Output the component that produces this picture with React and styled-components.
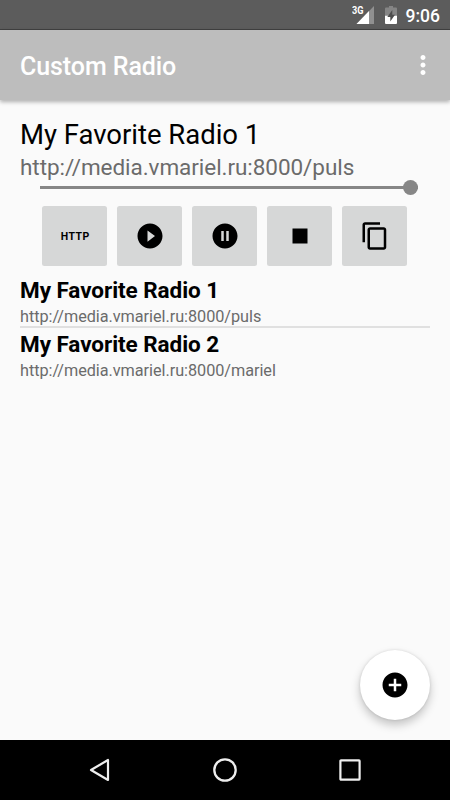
import React, { useState } from "react";
import styled, { createGlobalStyle } from "styled-components";
import {
  MdAddCircle,
  MdContentCopy,
  MdMoreVert,
  MdPauseCircleFilled,
  MdPlayCircleFilled,
  MdStop,
} from "react-icons/md";

const stations = [
  { name: "My Favorite Radio 1", url: "http://media.vmariel.ru:8000/puls" },
  { name: "My Favorite Radio 2", url: "http://media.vmariel.ru:8000/mariel" },
];

const SignalIcon = () => (
  <svg width="24" height="20" viewBox="0 0 24 20">
    <path d="M4.5 19L22 1V19Z" fill="#909090" />
    <path d="M4.5 19L17 6.1V19Z" fill="#fff" />
    <text x="0" y="9" fontSize="10" fontWeight="700" textLength="11.5" lengthAdjust="spacingAndGlyphs" fill="#fff">
      3G
    </text>
  </svg>
);

const BatteryIcon = () => (
  <svg width="12" height="18" viewBox="0 0 12 18">
    <path d="M4 0H8V1.5H11Q12 1.5 12 2.5V10H0V2.5Q0 1.5 1 1.5H4Z" fill="#858585" />
    <path d="M0 9.7H12V17Q12 18 11 18H1Q0 18 0 17Z" fill="#fff" />
    <path d="M7.3 4L2.3 11H5.3V15.6L10 8.7H7.3Z" fill="#4d4d4d" />
  </svg>
);

const App = () => {
  const [current, setCurrent] = useState(stations[0]);
  const volume = 100;

  return (
    <Screen>
      <GlobalStyle />
      <StatusBar>
        <SignalIcon />
        <BatteryIcon />
        <Clock>9:06</Clock>
      </StatusBar>
      <AppBar>
        <Title>Custom Radio</Title>
        <MenuButton aria-label="Menu">
          <MdMoreVert />
        </MenuButton>
      </AppBar>
      <Content>
        <CurrentName>{current.name}</CurrentName>
        <CurrentUrl>{current.url}</CurrentUrl>
        <Slider>
          <Track style={{ width: `${volume}%` }} />
          <Thumb />
        </Slider>
        <Controls>
          <ControlButton>
            <HttpLabel>HTTP</HttpLabel>
          </ControlButton>
          <ControlButton aria-label="Play">
            <MdPlayCircleFilled />
          </ControlButton>
          <ControlButton aria-label="Pause">
            <MdPauseCircleFilled />
          </ControlButton>
          <ControlButton aria-label="Stop">
            <MdStop />
          </ControlButton>
          <ControlButton aria-label="Copy">
            <MdContentCopy />
          </ControlButton>
        </Controls>
        <List>
          {stations.map((s) => (
            <Station key={s.url} onClick={() => setCurrent(s)}>
              <StationName>{s.name}</StationName>
              <StationUrl>{s.url}</StationUrl>
            </Station>
          ))}
        </List>
        <Fab aria-label="Add">
          <MdAddCircle />
        </Fab>
      </Content>
      <NavBar>
        <svg width="24" height="28" viewBox="0 0 24 28">
          <path d="M3 14L20 4V24Z" fill="none" stroke="#eee" strokeWidth="2.2" strokeLinejoin="round" />
        </svg>
        <svg width="24" height="24" viewBox="0 0 24 24">
          <circle cx="12" cy="12" r="10.7" fill="none" stroke="#eee" strokeWidth="2.3" />
        </svg>
        <svg width="24" height="24" viewBox="0 0 24 24">
          <rect x="2.4" y="2.4" width="19.2" height="19.2" rx="0.6" fill="none" stroke="#eee" strokeWidth="2.2" />
        </svg>
      </NavBar>
    </Screen>
  );
};

const GlobalStyle = createGlobalStyle`
  body {
    margin: 0;
    font-family: Roboto, sans-serif;
  }
  svg {
    display: block;
  }
`;

const Screen = styled.div`
  display: flex;
  flex-direction: column;
  width: 450px;
  height: 800px;
  overflow: hidden;
  background: #fafafa;
`;

const StatusBar = styled.div`
  display: flex;
  align-items: center;
  justify-content: flex-end;
  gap: 9px;
  height: 30px;
  box-sizing: border-box;
  padding-right: 10px;
  background: #5c5c5c;
  border-bottom: 1px solid #414141;
`;

const Clock = styled.span`
  color: #fff;
  font-size: 17.5px;
  font-weight: 500;
  line-height: 20px;
  padding-top: 2px;
`;

const AppBar = styled.header`
  display: flex;
  align-items: center;
  justify-content: space-between;
  height: 70px;
  box-sizing: border-box;
  padding: 0 12.5px 0 20px;
  background: #bdbdbd;
  box-shadow: 0 2px 4px rgba(0, 0, 0, 0.3);
`;

const Title = styled.h1`
  margin: 4px 0 0;
  color: #fff;
  font-size: 25px;
  font-weight: 500;
  letter-spacing: -0.08px;
  line-height: 30px;
`;

const MenuButton = styled.button`
  padding: 0;
  border: none;
  background: transparent;
  color: #fff;
  font-size: 30px;
`;

const Content = styled.main`
  display: flex;
  flex-direction: column;
  flex: 1;
  padding: 19px 20px 20px;
`;

const CurrentName = styled.div`
  color: #000;
  font-size: 27.5px;
  letter-spacing: -0.02px;
  line-height: 32px;
`;

const CurrentUrl = styled.div`
  margin-top: 3px;
  color: #6b6b6b;
  font-size: 22.5px;
  letter-spacing: -0.055px;
  line-height: 26px;
`;

const Slider = styled.div`
  display: flex;
  align-items: center;
  height: 15px;
  margin: 0 12.5px 0 20px;
`;

const Track = styled.div`
  height: 2.5px;
  background: #868686;
`;

const Thumb = styled.div`
  flex: none;
  width: 15px;
  height: 15px;
  margin-left: -15px;
  border-radius: 50%;
  background: #868686;
`;

const Controls = styled.div`
  display: flex;
  justify-content: center;
  gap: 10px;
  margin: 11px 0.5px 0 0;
`;

const ControlButton = styled.button`
  display: flex;
  align-items: center;
  justify-content: center;
  width: 65px;
  height: 60px;
  padding: 0;
  border: none;
  border-radius: 2.5px;
  background: #d6d7d7;
  color: #000;
  font-size: 30px;
`;

const HttpLabel = styled.span`
  padding: 2px 0 0 1px;
  font-family: Roboto, sans-serif;
  font-size: 10.5px;
  font-weight: 700;
  letter-spacing: 0.5px;
  line-height: 12px;
`;

const List = styled.div`
  margin-top: 11px;
`;

const Station = styled.div`
  height: 49px;
  & + & {
    border-top: 2px solid #e0e0e0;
    padding-top: 2.5px;
  }
`;

const StationName = styled.div`
  color: #000;
  font-size: 22.5px;
  font-weight: 700;
  letter-spacing: -0.06px;
  line-height: 26px;
`;

const StationUrl = styled.div`
  margin-top: 4px;
  color: #6b6b6b;
  font-size: 16.25px;
  letter-spacing: -0.045px;
  line-height: 19px;
`;

const Fab = styled.button`
  display: flex;
  align-items: center;
  justify-content: center;
  align-self: flex-end;
  width: 70px;
  height: 70px;
  margin-top: auto;
  padding: 0;
  border: none;
  border-radius: 50%;
  background: #fff;
  color: #000;
  font-size: 30px;
  box-shadow: 0 5px 10px rgba(0, 0, 0, 0.22), 0 0 3px rgba(0, 0, 0, 0.12);
`;

const NavBar = styled.nav`
  display: flex;
  align-items: center;
  justify-content: center;
  gap: 101px;
  height: 60px;
  background: #000;
`;

export default App;
